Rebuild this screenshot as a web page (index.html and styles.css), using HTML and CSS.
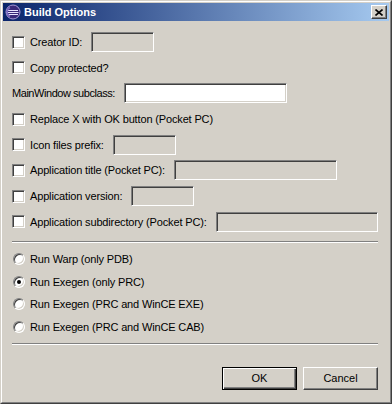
FILE: index.html
```html
<!DOCTYPE html>
<html lang="en">
<head>
  <meta charset="UTF-8" />
  <title>Build Options</title>
  <link rel="stylesheet" href="styles.css">
</head>
<body>

  <div class="window">
    <div class="frame">
      <!-- Title bar -->
      <div class="titlebar">
        <svg class="app-icon" width="16" height="16" viewBox="0 0 16 16">
          <circle cx="8" cy="8" r="7" fill="#3a2a7a"/>
          <circle cx="8" cy="8" r="7" fill="none" stroke="#a89ad8" stroke-width="1"/>
          <path d="M2 6.5h11M1.5 8.5h12M2 10.5h11" stroke="#e8e4ff" stroke-width="1"/>
          <path d="M5 3.5a5 5 0 0 0 0 9" stroke="#7a6ac0" stroke-width="1.5" fill="none"/>
        </svg>
        <span class="title">Build Options</span>
        <span class="close-btn">
          <svg width="8" height="7" viewBox="0 0 8 7">
            <path d="M0.5 0.5l7 6M7.5 0.5l-7 6" stroke="#000" stroke-width="1.6"/>
          </svg>
        </span>
      </div>

      <div class="content">
        <div class="fields">
          <div class="row">
            <span class="check"></span>
            <span class="label">Creator ID:</span>
            <span class="edit short disabled"></span>
          </div>
          <div class="row">
            <span class="check"></span>
            <span class="label">Copy protected?</span>
          </div>
          <div class="row">
            <span class="label plain">MainWindow subclass:</span>
            <span class="edit long"></span>
          </div>
          <div class="row">
            <span class="check"></span>
            <span class="label">Replace X with OK button (Pocket PC)</span>
          </div>
          <div class="row">
            <span class="check"></span>
            <span class="label">Icon files prefix:</span>
            <span class="edit short disabled"></span>
          </div>
          <div class="row">
            <span class="check"></span>
            <span class="label">Application title (Pocket PC):</span>
            <span class="edit long disabled"></span>
          </div>
          <div class="row">
            <span class="check"></span>
            <span class="label">Application version:</span>
            <span class="edit short disabled"></span>
          </div>
          <div class="row">
            <span class="check"></span>
            <span class="label">Application subdirectory (Pocket PC):</span>
            <span class="edit long disabled"></span>
          </div>
        </div>

        <div class="separator"></div>

        <div class="options">
          <div class="radio-row">
            <span class="radio"></span>
            <span class="label">Run Warp (only PDB)</span>
          </div>
          <div class="radio-row">
            <span class="radio checked"></span>
            <span class="label">Run Exegen (only PRC)</span>
          </div>
          <div class="radio-row">
            <span class="radio"></span>
            <span class="label">Run Exegen (PRC and WinCE EXE)</span>
          </div>
          <div class="radio-row">
            <span class="radio"></span>
            <span class="label">Run Exegen (PRC and WinCE CAB)</span>
          </div>
        </div>

        <div class="separator bottom"></div>

        <div class="actions">
          <button type="button" class="default">OK</button>
          <button type="button">Cancel</button>
        </div>
      </div>
    </div>
  </div>

</body>
</html>
```

FILE: styles.css
```css
/* Reset */
*, *::before, *::after {
  box-sizing: border-box;
}
body {
  margin: 0;
  font-family: "Liberation Sans", Arial, sans-serif;
  font-size: 11px;
  color: #000;
  background: #d4d0c8;
}

/* Window frame, classic 3D look */
.window {
  width: 392px;
  height: 404px;
  background: #d4d0c8;
  border: 1px solid;
  border-color: #d4d0c8 #404040 #404040 #d4d0c8;
}
.frame {
  height: 100%;
  display: flex;
  flex-direction: column;
  border: 1px solid;
  border-color: #fff #808080 #808080 #fff;
  padding: 1px;
}

/* Title bar */
.titlebar {
  height: 18px;
  display: flex;
  align-items: center;
  padding: 0 2px;
  background: linear-gradient(to right, #0a246a, #a6caf0);
}
.app-icon {
  flex-shrink: 0;
}
.title {
  margin-left: 3px;
  color: #fff;
  font-weight: bold;
  font-size: 11px;
}
.close-btn {
  margin-left: auto;
  width: 16px;
  height: 14px;
  display: flex;
  align-items: center;
  justify-content: center;
  background: #d4d0c8;
  border: 1px solid;
  border-color: #fff #404040 #404040 #fff;
  box-shadow: inset -1px -1px #808080;
}

/* Dialog body */
.content {
  flex: 1;
  display: flex;
  flex-direction: column;
  padding: 11px 11px 0 9px;
}
.fields {
  display: flex;
  flex-direction: column;
  gap: 5.7px;
}
.row {
  height: 20px;
  display: flex;
  align-items: center;
}
.label {
  white-space: nowrap;
  letter-spacing: -0.15px;
}
.label.plain {
  letter-spacing: -0.45px;
}
.check {
  width: 13px;
  height: 13px;
  margin-right: 5px;
  flex-shrink: 0;
  background: #fff;
  border: 1px solid;
  border-color: #808080 #fff #fff #808080;
  box-shadow: inset 1px 1px #404040, inset -1px -1px #d4d0c8;
}
.edit {
  height: 20px;
  margin-left: 9px;
  background: #fff;
  border: 1px solid;
  border-color: #808080 #fff #fff #808080;
  box-shadow: inset 1px 1px #404040, inset -1px -1px #d4d0c8;
}
.edit.disabled {
  background: #d4d0c8;
}
.edit.short {
  width: 63px;
}
.edit.long {
  width: 163px;
}

.separator {
  height: 2px;
  margin-top: 9px;
  border-top: 1px solid #808080;
  border-bottom: 1px solid #fff;
}
.separator.bottom {
  margin-top: 8px;
}

/* Radio group */
.options {
  display: flex;
  flex-direction: column;
  gap: 6.7px;
  margin-top: 8px;
}
.radio-row {
  height: 16px;
  display: flex;
  align-items: center;
}
.radio {
  width: 12px;
  height: 12px;
  margin: 0 5px 0 1px;
  flex-shrink: 0;
  display: flex;
  align-items: center;
  justify-content: center;
  border-radius: 50%;
  background: #fff;
  border: 1px solid;
  border-color: #808080 #fff #fff #808080;
  box-shadow: inset 1px 1px #404040, inset -1px -1px #d4d0c8;
}
.radio.checked::after {
  content: "";
  width: 4px;
  height: 4px;
  border-radius: 50%;
  background: #000;
}

/* Buttons */
.actions {
  display: flex;
  justify-content: flex-end;
  gap: 6px;
  margin-top: 22px;
}
button {
  width: 75px;
  height: 23px;
  font-family: inherit;
  font-size: 11px;
  color: #000;
  background: #d4d0c8;
  border: 1px solid;
  border-color: #fff #404040 #404040 #fff;
  box-shadow: inset -1px -1px #808080;
  padding: 0;
}
button.default {
  border: 1px solid #000;
  box-shadow: inset 1px 1px #fff, inset -1px -1px #404040, inset -2px -2px #808080;
}
```
